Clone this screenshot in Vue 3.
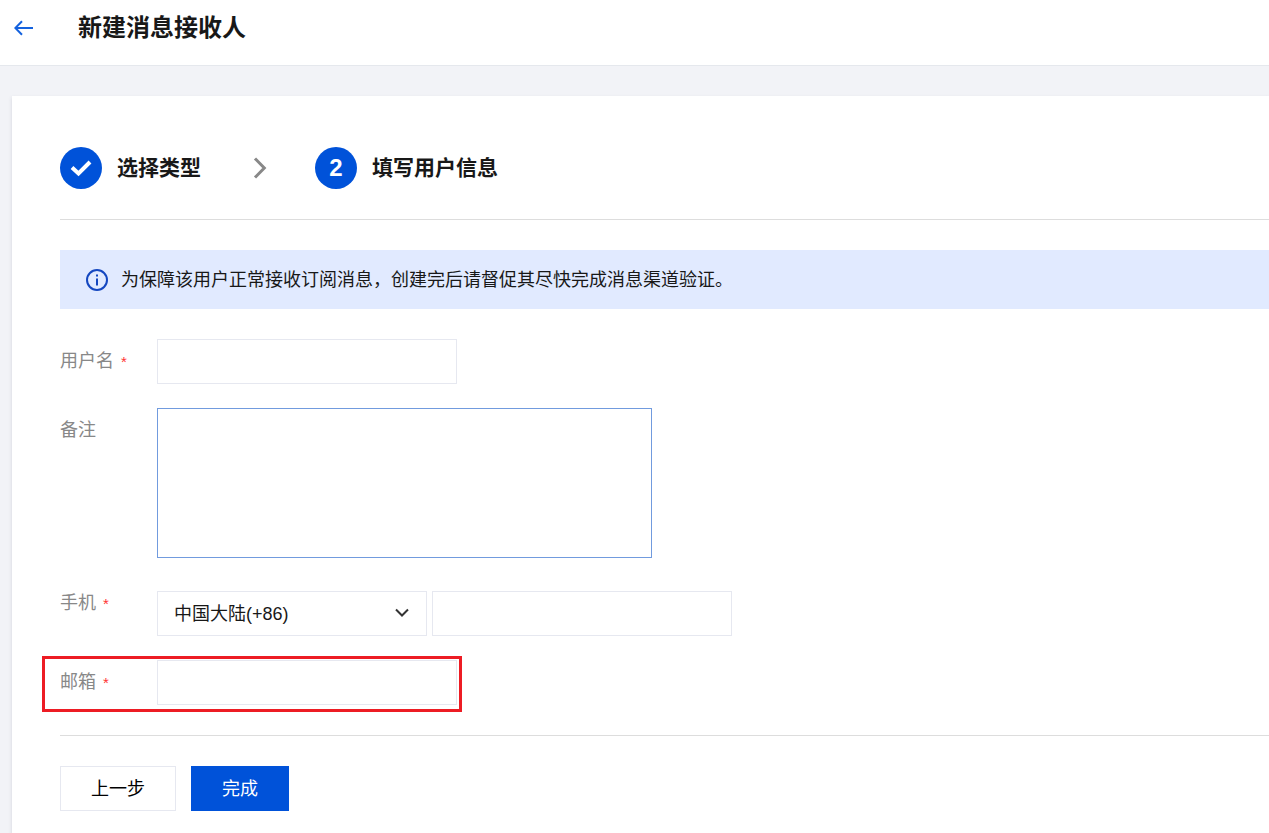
<script setup>
import { ref } from 'vue'

const username = ref('')
const remark = ref('')
const region = ref('86')
const phone = ref('')
const email = ref('')
</script>

<template>
  <div class="page">
    <header class="header">
      <a class="back" href="#" aria-label="返回">
        <svg width="20" height="16" viewBox="0 0 20 16" fill="none" stroke="#1462de" stroke-width="2">
          <path d="M19 8H1.5M8 1.3L1.3 8L8 14.7" />
        </svg>
      </a>
      <h1 class="title">新建消息接收人</h1>
    </header>

    <main class="card">
      <ol class="steps">
        <li class="step">
          <span class="badge">
            <svg width="22" height="18" viewBox="0 0 22 18" fill="none" stroke="#fff" stroke-width="4">
              <path d="M2 8.5L8.5 14.5L20 3" />
            </svg>
          </span>
          <span>选择类型</span>
        </li>
        <li class="divider" aria-hidden="true">
          <svg width="14" height="22" viewBox="0 0 14 22" fill="none" stroke="#888" stroke-width="3">
            <path d="M2 1.5L11.3 11L2 20.5" />
          </svg>
        </li>
        <li class="step" aria-current="step">
          <span class="badge">2</span>
          <span>填写用户信息</span>
        </li>
      </ol>

      <div class="notice">
        <svg width="24" height="24" viewBox="0 0 24 24" fill="none" stroke="#1447c0" stroke-width="2">
          <circle cx="12" cy="12" r="10" />
          <path d="M12 10.5V17.5M12 6.5V8.5" />
        </svg>
        <p>为保障该用户正常接收订阅消息，创建完后请督促其尽快完成消息渠道验证。</p>
      </div>

      <form @submit.prevent>
        <div class="fields">
          <div class="row">
            <label for="username">用户名<span class="required">*</span></label>
            <input id="username" v-model="username" class="control" type="text" required />
          </div>
          <div class="row remark">
            <label for="remark">备注</label>
            <textarea id="remark" v-model="remark" class="control"></textarea>
          </div>
          <div class="row phone">
            <label for="phone">手机<span class="required">*</span></label>
            <div class="group">
              <div class="picker">
                <select v-model="region" class="control" aria-label="国家或地区">
                  <option value="86">中国大陆(+86)</option>
                </select>
                <svg class="caret" width="14" height="10" viewBox="0 0 14 10" fill="none" stroke="#333" stroke-width="2">
                  <path d="M1 1.5L7 7.5L13 1.5" />
                </svg>
              </div>
              <input id="phone" v-model="phone" class="control" type="tel" required />
            </div>
          </div>
          <div class="row marked">
            <label for="email">邮箱<span class="required">*</span></label>
            <input id="email" v-model="email" class="control" type="email" required />
          </div>
        </div>

        <div class="actions">
          <button class="button" type="button">上一步</button>
          <button class="button primary" type="submit">完成</button>
        </div>
      </form>
    </main>
  </div>
</template>

<style>
body {
  background: #f2f3f7;
}
</style>

<style scoped>
.page {
  display: flex;
  flex-direction: column;
  min-height: 100vh;
  overflow: hidden;
  color: #181818;
  font-family: "Liberation Sans", "Noto Sans CJK SC", sans-serif;
  font-size: 18px;
  line-height: 24px;
}

.page *,
.page *::after {
  box-sizing: border-box;
}

.header {
  display: flex;
  align-items: center;
  gap: 44px;
  height: 66px;
  padding: 0 14px 10px;
  border-bottom: 1px solid #e5e8ed;
  background: #fff;
}

.back {
  display: flex;
}

.title {
  margin: 0;
  font-size: 24px;
  line-height: 32px;
}

.card {
  flex: 1;
  margin: 30px 0 0 12px;
  padding: 51px 0 22px 48px;
  background: #fff;
  box-shadow: 0 2px 4px rgba(54, 58, 80, 0.16);
}

.steps {
  display: flex;
  align-items: center;
  margin: 0;
  padding: 0 0 30px;
  border-bottom: 1px solid #ddd;
  list-style: none;
  font-size: 21px;
  font-weight: 700;
}

.step {
  display: flex;
  align-items: center;
  gap: 15px;
}

.badge {
  display: flex;
  align-items: center;
  justify-content: center;
  width: 42px;
  height: 42px;
  border-radius: 50%;
  background: #0052d9;
  color: #fff;
  font-size: 24px;
}

.divider {
  display: flex;
  margin: 0 48px 0 52px;
}

.notice {
  display: flex;
  align-items: center;
  gap: 12px;
  min-height: 59px;
  margin: 30px 0;
  padding: 0 25px;
  background: #e1eaff;
}

.notice p {
  margin: 0;
}

.fields {
  display: flex;
  flex-direction: column;
  gap: 24px;
  padding-bottom: 30px;
  border-bottom: 1px solid #ddd;
}

.row {
  position: relative;
  display: flex;
  align-items: flex-start;
}

.row label {
  width: 97px;
  padding-top: 10px;
  color: #888;
}

.row.phone {
  margin-top: 9px;
}

.row.phone label {
  padding-top: 0;
}

.required {
  margin-left: 7px;
  color: #f33;
  font-size: 15px;
}

.control {
  width: 300px;
  height: 45px;
  margin: 0;
  padding: 0 16px;
  border: 1px solid #e6e8f0;
  border-radius: 0;
  outline: none;
  background: #fff;
  color: inherit;
  font: inherit;
}

textarea.control {
  width: 495px;
  height: 150px;
  padding: 10px 16px;
  border-color: #719bde;
  resize: none;
}

.group {
  display: flex;
  gap: 5px;
}

.picker {
  position: relative;
}

.picker .control {
  width: 270px;
  appearance: none;
}

.caret {
  position: absolute;
  top: 17px;
  right: 18px;
  pointer-events: none;
}

.marked::after {
  content: "";
  position: absolute;
  top: -4px;
  left: -18px;
  width: 420px;
  height: 56px;
  border: 3px solid #ed1c24;
  pointer-events: none;
}

.actions {
  display: flex;
  gap: 15px;
  padding-top: 30px;
}

.button {
  height: 45px;
  padding: 0 30px;
  border: 1px solid #e6e8f0;
  background: #fff;
  color: #000;
  font: inherit;
}

.button.primary {
  border-color: #0052d9;
  background: #0052d9;
  color: #fff;
}
</style>
